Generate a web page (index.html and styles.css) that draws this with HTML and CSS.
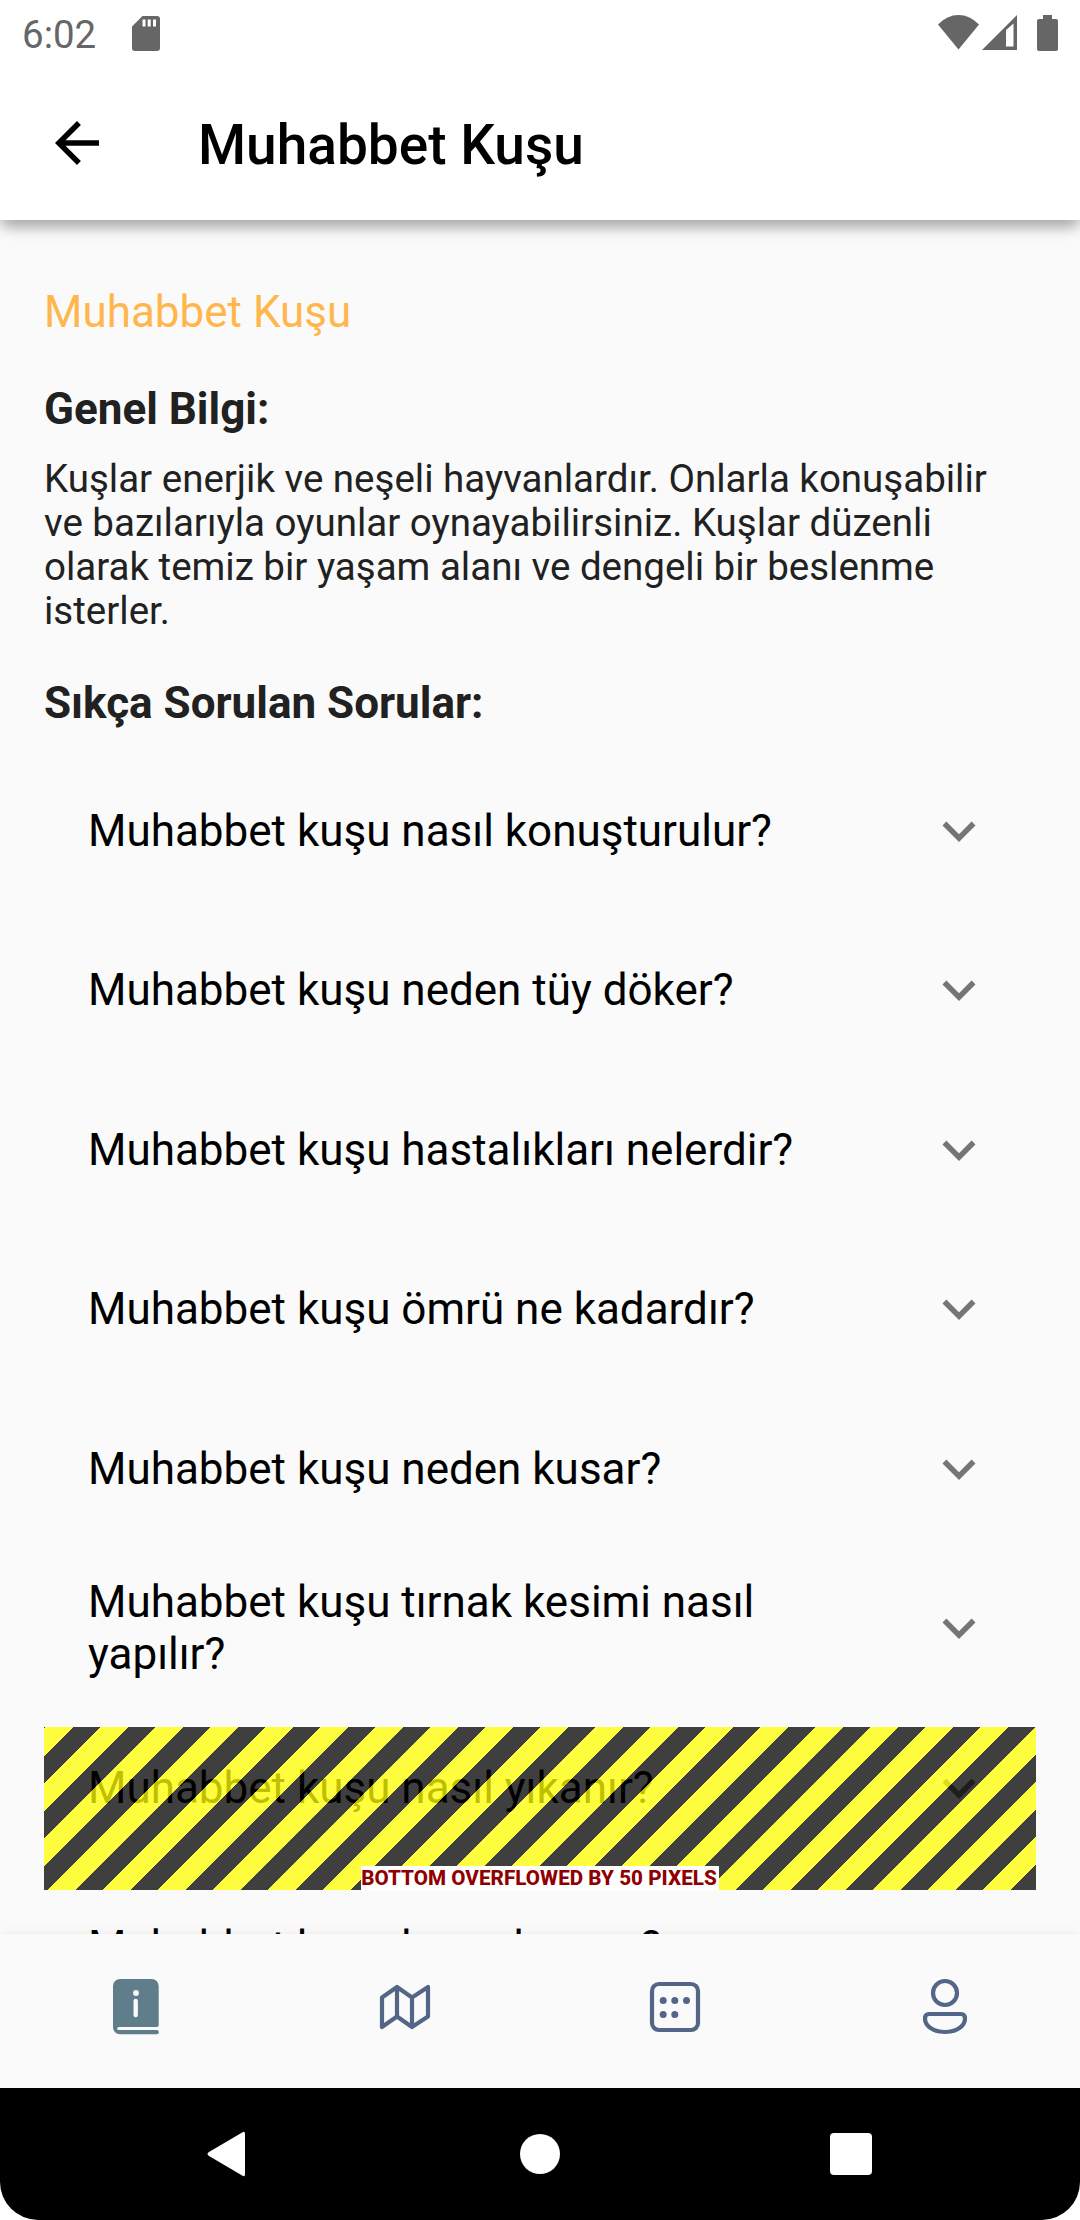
FILE: index.html
```html
<!DOCTYPE html>
<html lang="tr">
<head>
<meta charset="utf-8">
<title>Muhabbet Kuşu</title>
<link rel="stylesheet" href="styles.css">
</head>
<body>
<svg class="defs" aria-hidden="true"><symbol id="chevron" viewBox="0 0 24 24"><path d="M16.59 8.59 12 13.17 7.41 8.59 6 10l6 6 6-6z"/></symbol></svg>
<div class="screen">
  <header class="top">
    <div class="status">
      <span class="clock">6:02</span>
      <svg class="sd" width="28" height="35" viewBox="0 0 28 35"><path fill-rule="evenodd" d="M10.500 0H25a3 3 0 0 1 3 3V32a3 3 0 0 1-3 3H3a3 3 0 0 1-3-3V10.500ZM10.500 3.500V10.500H13.500V3.500ZM15.700 3.500V10.500H18.700V3.500ZM21 3.500V10.500H24V3.500Z"/></svg>
      <svg class="wifi" width="41" height="35" viewBox="0 0 41 35"><path d="M0 9.500Q9 0 20.500 0T41 9.500L20.500 34.500Z"/></svg>
      <svg class="signal" width="35" height="35" viewBox="0 0 35 35"><path fill-rule="evenodd" d="M0 35 35 0V35ZM24 15V31.500H31.500V8.500Z"/></svg>
      <svg class="battery" width="21" height="36" viewBox="0 0 21 36"><path d="M6 0h9v4h4a2 2 0 0 1 2 2v28a2 2 0 0 1-2 2H2a2 2 0 0 1-2-2V6a2 2 0 0 1 2-2h4Z"/></svg>
    </div>
    <div class="appbar">
      <svg width="66" height="66" viewBox="0 0 24 24"><path d="M20 11H7.830l5.590-5.590L12 4l-8 8 8 8 1.410-1.410L7.830 13H20z"/></svg>
      <h1>Muhabbet Kuşu</h1>
    </div>
  </header>
  <main class="content">
    <p class="breed">Muhabbet Kuşu</p>
    <h2>Genel Bilgi:</h2>
    <p class="info">Kuşlar enerjik ve neşeli hayvanlardır. Onlarla konuşabilir ve bazılarıyla oyunlar oynayabilirsiniz. Kuşlar düzenli olarak temiz bir yaşam alanı ve dengeli bir beslenme isterler.</p>
    <h2 class="faq-title">Sıkça Sorulan Sorular:</h2>
    <ul class="faq">
      <li><span>Muhabbet kuşu nasıl konuşturulur?</span><svg><use href="#chevron"/></svg></li>
      <li><span>Muhabbet kuşu neden tüy döker?</span><svg><use href="#chevron"/></svg></li>
      <li><span>Muhabbet kuşu hastalıkları nelerdir?</span><svg><use href="#chevron"/></svg></li>
      <li><span>Muhabbet kuşu ömrü ne kadardır?</span><svg><use href="#chevron"/></svg></li>
      <li><span>Muhabbet kuşu neden kusar?</span><svg><use href="#chevron"/></svg></li>
      <li><span>Muhabbet kuşu tırnak kesimi nasıl yapılır?</span><svg><use href="#chevron"/></svg></li>
      <li><span>Muhabbet kuşu nasıl yıkanır?</span><svg><use href="#chevron"/></svg></li>
      <li><span>Muhabbet kuşu kaç yıl yaşar?</span><svg><use href="#chevron"/></svg></li>
    </ul>
    <div class="overflow"><span>BOTTOM OVERFLOWED BY 50 PIXELS</span></div>
  </main>
  <nav class="tabs">
    <a><svg width="66" height="66" viewBox="0 0 66 66"><path fill="#607d8b" d="M18 6H49.700A7 7 0 0 1 56.700 13V52a2 2 0 0 1-2 2H17.500Q15 54 15 55.500T17.500 57H54.700a2.100 2.100 0 0 1 0 4.300H18A7 7 0 0 1 11 54.300V13A7 7 0 0 1 18 6Z"/><circle cx="34" cy="20" r="2.900" fill="#fafafa"/><path d="M33.700 28V42" stroke="#fafafa" stroke-width="4.400" stroke-linecap="round"/></svg></a>
    <a><svg class="line" width="66" height="66" viewBox="0 0 66 66"><path d="M10 24.500 25 14 40 24.500 56 14V43.500L40 54 25 43.500 10 54ZM25 14V43.500M40 24.500V54"/></svg></a>
    <a><svg class="line" width="66" height="66" viewBox="0 0 66 66"><rect x="10" y="11" width="46" height="46" rx="7"/><g class="dots"><circle cx="21.200" cy="27.600" r="3.500"/><circle cx="32.800" cy="27.600" r="3.500"/><circle cx="44.500" cy="27.600" r="3.500"/><circle cx="21.200" cy="41.400" r="3.500"/><circle cx="32.800" cy="41.400" r="3.500"/></g></svg></a>
    <a><svg class="line" width="66" height="66" viewBox="0 0 66 66"><circle cx="33" cy="20" r="12"/><path d="M17 41H49Q53 41 53 45.500C53 53.500 44 59 33 59S13 53.500 13 45.500Q13 41 17 41Z"/></svg></a>
  </nav>
  <footer class="system">
    <svg width="40" height="48" viewBox="0 0 40 48"><path d="M37 2 3 22Q0 24 3 26L37 46Q39 47 39 44V4Q39 1 37 2Z"/></svg>
    <svg class="home" width="40" height="40" viewBox="0 0 40 40"><circle cx="20" cy="20" r="20"/></svg>
    <svg width="42" height="42" viewBox="0 0 42 42"><rect width="42" height="42" rx="4"/></svg>
  </footer>
</div>
</body>
</html>
```
FILE: styles.css
```css
* { box-sizing: border-box; }
body { margin: 0; background: #fff; font-family: Roboto, sans-serif; }
h1, h2, p, ul { margin: 0; padding: 0; }
svg { display: block; flex: none; }
.defs { position: absolute; width: 0; height: 0; }

.screen {
  width: 1080px;
  height: 2220px;
  display: flex;
  flex-direction: column;
  overflow: hidden;
  background: linear-gradient(#fafafa 2150px, #fff 2150px);
}

/* Status bar and app bar share one raised white surface */
.top {
  position: relative;
  z-index: 2;
  height: 220px;
  flex: none;
  background: #fff;
  box-shadow: 0 11px 14px -3px rgba(0, 0, 0, .2), 0 6px 12px rgba(0, 0, 0, .16);
}
.status {
  height: 66px;
  padding: 15px 22px 0;
  display: flex;
  align-items: flex-start;
  fill: #666;
}
.clock { width: 110px; font-size: 38.5px; line-height: 40px; color: #666; }
.sd { margin-top: 1px; }
.wifi { margin-left: auto; }
.signal { margin-left: 3px; }
.battery { margin-left: 20px; }
.appbar {
  height: 154px;
  padding-left: 44px;
  display: flex;
  align-items: center;
  gap: 88px;
}
.appbar h1 { padding-top: 3px; font-size: 55px; font-weight: 500; line-height: 64px; }

.content { position: relative; flex: 1; min-height: 0; padding: 66px 44px 0; color: #212121; overflow: hidden; }
.breed { height: 97px; font-size: 44px; line-height: 52px; color: #ffb74d; }
h2 { font-size: 44px; font-weight: 700; line-height: 52px; }
.info { margin-top: 22px; width: 965px; font-size: 38.5px; line-height: 44px; }
.faq-title { margin-top: 44px; }
.faq { list-style: none; margin-top: 22px; }
.faq li {
  height: 159.5px;
  padding: 0 44px;
  display: flex;
  align-items: center;
  justify-content: space-between;
  font-size: 44px;
  line-height: 52px;
  color: #000;
}
.faq span { width: 740px; }
.faq svg { width: 66px; height: 66px; fill: #757575; }

/* Striped warning lying over the list */
.overflow {
  position: absolute;
  left: 44px;
  right: 44px;
  top: 1507px;
  height: 163px;
  display: flex;
  align-items: flex-end;
  justify-content: center;
  background: repeating-linear-gradient(135deg,
    rgba(0, 0, 0, .75) 0 1.41px,
    rgba(255, 255, 0, .75) 1.41px 20.86px,
    rgba(0, 0, 0, .75) 20.86px 38.89px);
}
.overflow span {
  height: 24px;
  padding-right: 2px;
  background: #fff;
  color: #900000;
  font-size: 20.625px;
  font-weight: 800;
  line-height: 25px;
  letter-spacing: .05px;
  white-space: nowrap;
}

.tabs {
  position: relative;
  height: 154px;
  flex: none;
  display: grid;
  grid-template-columns: repeat(4, 1fr);
  place-items: center;
  padding-bottom: 10px;
  background: #fafafa;
  box-shadow: 0 -1px 10px rgba(0, 0, 0, .06);
}
.line { fill: none; stroke: #546688; stroke-width: 4.2; stroke-linejoin: round; }
.dots { fill: #546688; stroke: none; }

.system {
  position: relative;
  height: 132px;
  flex: none;
  display: flex;
  align-items: center;
  padding-left: 206px;
  background: #000;
  fill: #fff;
  border-radius: 0 0 38px 38px;
}
.home { margin: 0 270px 0 274px; }
```
